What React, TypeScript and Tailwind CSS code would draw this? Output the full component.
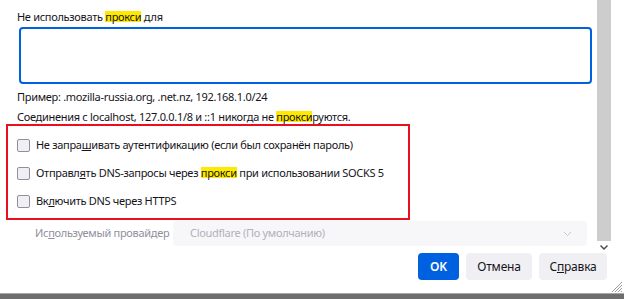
import React from "react";

const Hl = ({ children }: { children: React.ReactNode }) => (
  <span className="inline-block bg-[#ffe900] leading-[11px]">{children}</span>
);

const Check = ({ children }: { children: React.ReactNode }) => (
  <div className="flex items-center h-[28px]">
    <div className="w-[13px] h-[13px] rounded-[2px] border border-[#8f8f9d] bg-[#f0f0f4] shrink-0" />
    <span className="ml-[6px] text-[11px] tracking-[-0.3px] whitespace-nowrap text-[#15141a]">{children}</span>
  </div>
);

export default function App() {
  return (
    <div
      className="w-[624px] h-[299px] bg-white flex flex-col overflow-hidden relative text-[#15141a]"
      style={{ fontFamily: '"Noto Sans", "Open Sans", sans-serif' }}
    >
      <div className="flex h-[253px] shrink-0">
        <div className="flex-1 flex flex-col pl-[6px]">
          <div className="ml-[11px] mt-[9px] leading-[16px] text-[11px] tracking-[-0.3px] whitespace-nowrap">
            Не использовать <Hl>прокси</Hl> для
          </div>
          <div className="ml-[13px] mt-[2px] w-[573px] h-[57px] border-2 border-[#0061e0] rounded-[4px]" />
          <div className="ml-[11px] mt-[6px] leading-[14px] text-[11px] tracking-[-0.3px] whitespace-nowrap">
            Пример: .mozilla-russia.org, .net.nz, 192.168.1.0/24
          </div>
          <div className="ml-[11px] mt-[6px] leading-[14px] text-[11px] tracking-[-0.3px] whitespace-nowrap">
            Соединения с localhost, 127.0.0.1/8 и ::1 никогда не <Hl>прокси</Hl>руются.
          </div>
          <div className="w-[404px] border-2 border-[#e8101f] pl-[9px] pt-[5px] pb-[3px]">
            <Check>
              Не запра<u>ш</u>ивать аутентификацию (если был сохранён пароль)
            </Check>
            <Check>
              Отправл<u>я</u>ть DNS-запросы через <Hl>прокси</Hl> при использовании SOCKS 5
            </Check>
            <Check>
              Вк<u>л</u>ючить DNS через HTTPS
            </Check>
          </div>
          <div className="flex items-center mt-[1px] h-[25px]">
            <span className="ml-[29px] w-[138px] text-[11px] tracking-[-0.3px] whitespace-nowrap text-[#8f8f9d]">
              Ис<u>п</u>ользуемый провайдер
            </span>
            <div className="w-[414px] h-[25px] rounded-[4px] bg-[#f7f7f9] flex items-center justify-between pl-[17px] pr-[15px]">
              <span className="text-[11px] tracking-[-0.3px] whitespace-nowrap text-[#b1b1b9]">Cloudflare (По умолчанию)</span>
              <svg width="9" height="6" viewBox="0 0 9 6" fill="none">
                <path d="M1 1l3.5 3.5L8 1" stroke="#c4c4cc" strokeWidth="1" />
              </svg>
            </div>
          </div>
        </div>
        <div className="w-[14px] flex flex-col shrink-0">
          <div className="h-[241px] bg-[#cdcdcd]" />
          <div className="flex-1 flex justify-center pt-[4px]">
            <svg width="8" height="5" viewBox="0 0 8 5" fill="none">
              <path d="M0.5 0.5l3.5 3.5L7.5 0.5" stroke="#505050" strokeWidth="1.5" />
            </svg>
          </div>
        </div>
        <div className="w-[13px] shrink-0" />
      </div>
      <div className="flex justify-end gap-[7px] pr-[17px] h-[40px] shrink-0">
        <button className="w-[41px] h-[27px] rounded-[4px] bg-[#0061e0] text-white text-[12px] font-semibold">
          OK
        </button>
        <button className="w-[66px] h-[27px] rounded-[4px] bg-[#f0f0f4] text-[12px] tracking-[-0.2px] text-[#15141a]">
          Отмена
        </button>
        <button className="w-[68px] h-[27px] rounded-[4px] bg-[#f0f0f4] text-[12px] tracking-[-0.2px] text-[#15141a]">
          С<u>п</u>равка
        </button>
      </div>
      <div className="h-[6px] border-t border-[#a9a9a9] bg-[#6e6e6e] shrink-0" />
      <svg
        className="absolute right-[2px] bottom-[7px]"
        width="11"
        height="11"
        viewBox="0 0 11 11"
      >
        <path d="M11 1L1 11M11 4L4 11M11 7L7 11M11 10L10 11" stroke="#9a9a9a" strokeWidth="1" />
      </svg>
    </div>
  );
}
